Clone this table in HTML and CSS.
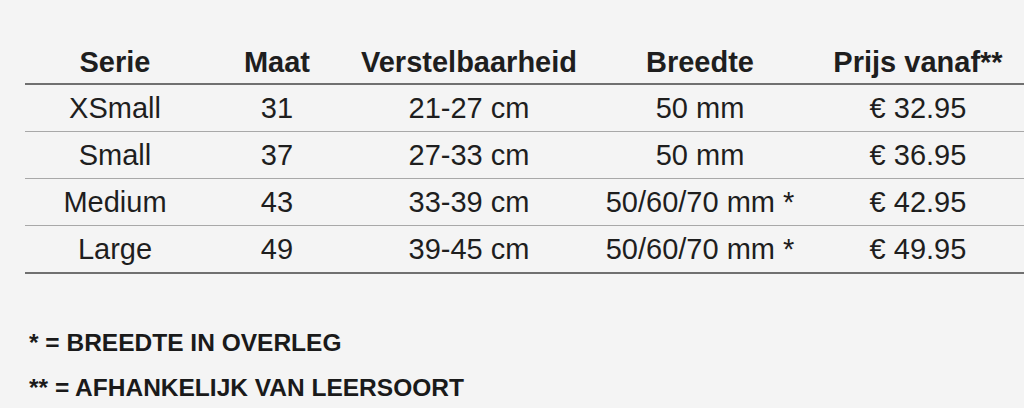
FILE: index.html
```html
<!DOCTYPE html>
<html lang="nl">
<head>
<meta charset="utf-8">
<title>Maten</title>
<link rel="stylesheet" href="styles.css">
</head>
<body>
<div class="page">
  <table class="sizes">
    <colgroup>
      <col class="c1"><col class="c2"><col class="c3"><col class="c4"><col class="c5">
    </colgroup>
    <thead>
      <tr><th>Serie</th><th>Maat</th><th>Verstelbaarheid</th><th>Breedte</th><th>Prijs vanaf**</th></tr>
    </thead>
    <tbody>
      <tr><td>XSmall</td><td>31</td><td>21-27 cm</td><td>50 mm</td><td>€ 32.95</td></tr>
      <tr><td>Small</td><td>37</td><td>27-33 cm</td><td>50 mm</td><td>€ 36.95</td></tr>
      <tr><td>Medium</td><td>43</td><td>33-39 cm</td><td>50/60/70 mm *</td><td>€ 42.95</td></tr>
      <tr class="last"><td>Large</td><td>49</td><td>39-45 cm</td><td>50/60/70 mm *</td><td>€ 49.95</td></tr>
    </tbody>
  </table>
  <div class="notes">
    <p>* = BREEDTE IN OVERLEG</p>
    <p>** = AFHANKELIJK VAN LEERSOORT</p>
  </div>
</div>
</body>
</html>
```

FILE: styles.css
```css
html, body {
  margin: 0;
  padding: 0;
  background: #f4f4f4;
}
body {
  width: 1024px;
  height: 408px;
  overflow: hidden;
  font-family: "Liberation Sans", Arial, sans-serif;
  color: #1e1e1e;
}
.page {
  padding-top: 40px;
}
.sizes {
  margin-left: 25px;
  width: 1000px;
  border-collapse: collapse;
  table-layout: fixed;
}
.c1 { width: 180px; }
.c2 { width: 144px; }
.c3 { width: 240px; }
.c4 { width: 222px; }
.c5 { width: 214px; }
.sizes th,
.sizes td {
  padding: 0;
  text-align: center;
  font-size: 29px;
  white-space: nowrap;
}
.sizes th {
  font-weight: bold;
  height: 41px;
  line-height: 41px;
  padding-top: 2px;
  border-bottom: 2px solid #707070;
  vertical-align: middle;
}
.sizes td {
  font-weight: normal;
  height: 46px;
  line-height: 46px;
  border-bottom: 1px solid #a8a8a8;
  vertical-align: middle;
}
.sizes tr.last td {
  border-bottom: 2px solid #707070;
}
.notes {
  padding-left: 29px;
  margin-top: 46px;
}
.notes p {
  margin: 0;
  font-size: 24.5px;
  font-weight: bold;
  line-height: 45px;
  color: #1a1a1a;
}
```
